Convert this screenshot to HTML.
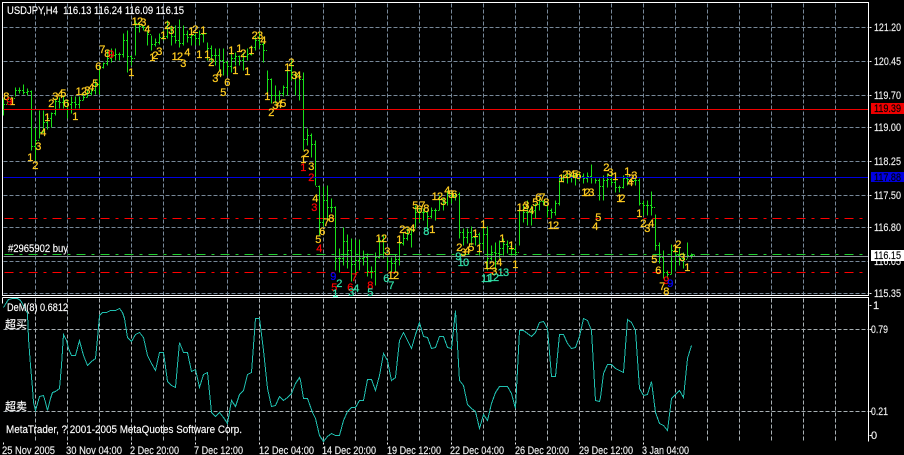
<!DOCTYPE html>
<html><head><meta charset="utf-8"><title>USDJPY,H4</title>
<style>
html,body{margin:0;padding:0;background:#000;width:904px;height:455px;overflow:hidden}
svg{display:block}
text{font-family:"Liberation Sans","Noto Sans CJK SC",sans-serif;font-size:11px}
.n text{letter-spacing:-.7px}
</style></head><body>
<svg xmlns="http://www.w3.org/2000/svg" width="904" height="455" viewBox="0 0 904 455">
<rect width="904" height="455" fill="#000"/>
<g transform="translate(.5,.5)" shape-rendering="crispEdges" fill="none">
<path stroke="#778899" stroke-dasharray="4 2" d="M3 27H868M3 61H868M3 95H868M3 127H868M3 161H868M3 195H868M3 227H868M3 261H868M3 293H868
M35 3V295M67 3V295M99 3V295M131 3V295M163 3V295M195 3V295M227 3V295M259 3V295M291 3V295M323 3V295M355 3V295M387 3V295M419 3V295M451 3V295M483 3V295M515 3V295M547 3V295M579 3V295M611 3V295M643 3V295M675 3V295M707 3V295M739 3V295M771 3V295M803 3V295M835 3V295"/>
<path stroke="#a8b0b4" stroke-dasharray="4 2" d="M3 329H868M3 411H868
M35 298V441M67 298V441M99 298V441M131 298V441M163 298V441M195 298V441M227 298V441M259 298V441M291 298V441M323 298V441M355 298V441M387 298V441M419 298V441M451 298V441M483 298V441M515 298V441M547 298V441M579 298V441M611 298V441M643 298V441M675 298V441M707 298V441M739 298V441M771 298V441M803 298V441M835 298V441"/>
<path stroke="#ff0000" stroke-dasharray="9 6 3 6" d="M4 218H862M4 272H862"/>
<path stroke="#20d030" stroke-dasharray="9 6 3 6" d="M4 254H862"/>
<path stroke="#18e018" d="M3 98V115M7 97V103M11 96V102M15 87V96M19 87V93M23 84V94M27 88V95M31 90V150M35 127V160M39 110V138M43 110V132M47 115V129M51 112V127M55 98V115M59 97V108M63 95V108M67 100V118M71 96V113M75 96V108M79 96V108M83 93V100M87 90V97M91 88V95M95 80V94M99 65V94M103 62V68M107 50V65M111 48V62M115 48V60M119 52V60M123 33V57M127 30V72M131 55V65M135 20V55M139 22V32M143 25V30M147 30V45M151 35V50M155 38V46M159 33V44M163 30V40M167 20V38M171 25V45M175 25V43M179 19V47M183 25V45M187 30V42M191 30V45M195 33V45M199 30V45M203 30V42M207 42V60M211 45V62M215 48V65M219 48V70M223 48V75M227 60V75M231 52V72M235 52V65M239 55V65M243 52V70M247 48V60M251 45V55M255 36V50M259 32V48M263 42V62M267 70V98M271 78V103M275 85V103M279 90V100M283 85V96M287 65V95M291 60V80M295 72V95M299 72V100
M303 72V150M307 128V145M311 133V157M315 140V185M319 185V235M323 186V226M327 185V220M331 198V212M335 206V270M339 248V272M343 227V265M347 234V268M351 238V281M355 239V275M359 239V270M363 250V265M367 253V276M371 266V278M375 252V285M379 237V258M383 235V258M387 255V270M391 257V272M395 254V272M399 237V265M403 232V245M407 228V240M411 228V247M415 205V228M419 207V222M423 208V220M427 210V230M431 207V218M435 208V220M439 195V210M443 198V210M447 190V205M451 192V203M455 192V200M459 192V238M463 228V245M467 228V243M471 226V245M475 231V245M479 232V255M483 226V250M487 226V270M491 245V260M495 242V270M499 240V258M503 238V255M507 240V253M511 243V255M515 245V255M519 207V245M523 205V222M527 200V225M531 205V225M535 203V218M539 198V210M543 200V205M547 205V217M551 208V218M555 200V215M559 176V205M563 174V182M567 173V183M571 172V182M575 172V185M579 172V180M583 173V183M587 172V182M591 164V183M595 178V183M599 178V200
M603 175V200M607 173V187M611 173V185M615 178V192M619 185V192M623 175V188M627 175V185M631 178V183M635 178V185M639 178V205M643 200V215M647 200V215M651 191V215M655 214V250M659 242V263M663 250V278M667 270V278M671 244V274M675 247V270M679 247V265M683 252V268M687 242V258M691 253V258"/>
<path stroke="#18e018" id="ct" d="M4 104.5h1M8 99.5h1M12 98.5h1M16 90.5h1M20 90.5h1M24 92.5h1M28 91.5h1M32 146.5h1M36 140.5h1M40 132.5h1M44 122.5h1M48 118.5h1M52 113.5h1M56 101.5h1M60 102.5h1M64 100.5h1M68 104.5h1M72 102.5h1M76 104.5h1M80 100.5h1M84 97.5h1M88 93.5h1M92 90.5h1M96 84.5h1M100 67.5h1M104 63.5h1M108 58.5h1M112 55.5h1M116 54.5h1M120 54.5h1M124 40.5h1M128 56.5h1M132 58.5h1M136 23.5h1M140 26.5h1M144 27.5h1M148 34.5h1M152 44.5h1M156 42.5h1M160 37.5h1M164 36.5h1M168 28.5h1M172 36.5h1M176 40.5h1M180 43.5h1M184 34.5h1M188 37.5h1M192 35.5h1M196 38.5h1M200 34.5h1M204 33.5h1M208 48.5h1M212 55.5h1M216 55.5h1M220 60.5h1M224 62.5h1M228 66.5h1M232 58.5h1M236 56.5h1M240 60.5h1M244 56.5h1M248 54.5h1M252 47.5h1M256 40.5h1M260 44.5h1M264 50.5h1M268 79.5h1M272 95.5h1M276 95.5h1M280 93.5h1M284 87.5h1M288 70.5h1M292 74.5h1M296 75.5h1M300 79.5h1M304 139.5h1M308 135.5h1M312 144.5h1M316 186.5h1M320 222.5h1M324 200.5h1M328 207.5h1M332 207.5h1M336 258.5h1M340 258.5h1M344 241.5h1M348 250.5h1M352 264.5h1M356 260.5h1M360 258.5h1M364 257.5h1M368 271.5h1M372 271.5h1M376 257.5h1M380 240.5h1M384 252.5h1M388 261.5h1M392 263.5h1M396 259.5h1M400 243.5h1M404 238.5h1M408 234.5h1M412 230.5h1M416 212.5h1M420 212.5h1M424 212.5h1M428 216.5h1M432 210.5h1M436 210.5h1M440 199.5h1M444 202.5h1M448 193.5h1M452 196.5h1M456 194.5h1M460 232.5h1M464 237.5h1M468 232.5h1M472 237.5h1M476 234.5h1M480 243.5h1M484 234.5h1M488 258.5h1M492 252.5h1M496 253.5h1M500 248.5h1M504 244.5h1M508 246.5h1M512 249.5h1M516 252.5h1M520 210.5h1M524 212.5h1M528 212.5h1M532 210.5h1M536 204.5h1M540 201.5h1M544 202.5h1M548 210.5h1M552 212.5h1M556 203.5h1M560 178.5h1M564 177.5h1M568 177.5h1M572 176.5h1M576 177.5h1M580 176.5h1M584 178.5h1M588 176.5h1M592 177.5h1M596 180.5h1M600 186.5h1M604 180.5h1M608 179.5h1M612 182.5h1M616 187.5h1M620 187.5h1M624 178.5h1M628 179.5h1M632 180.5h1M636 180.5h1M640 203.5h1M644 205.5h1M648 205.5h1M652 207.5h1M656 245.5h1M660 257.5h1M664 272.5h1M668 274.5h1M672 250.5h1M676 255.5h1M680 258.5h1M684 259.5h1M688 255.5h1M692 255.5h1" transform="translate(-.5,-.5)"/>
<use href="#ct" x="2"/>
<path stroke="#8a9298" d="M3 256H868"/>
<path stroke="#f00000" d="M3 109H868"/>
<path stroke="#0000e0" d="M3 177H868"/>
<path stroke="#20c0b0" stroke-linejoin="miter" d="M3 307L6 302L8 299L12 298L17 298L20 300L24 307L27 313L28 338L30 365L32 388L33 402L35 410L37 403L39 396L43 395L45 402L47 410L50 398L52 392L55 391L59 388L61 365L63 334L66 340L68 348L71 355L75 355L79 340L83 355L87 365L91 361L95 358L97 338L99 315L102 312L106 312L110 310L115 310L119 308L122 312L124 318L127 337L131 341L135 334L139 332L143 337L147 355L151 363L155 370L159 352L163 352L167 381L171 385L175 387L179 342L183 352L187 352L191 371L195 369L199 387L203 374L207 372L211 412L215 416L219 412L223 417L227 423L231 400L235 406L239 394L243 390L247 374L251 372L255 318L259 318L263 350L267 388L271 406L275 405L279 396L283 400L287 397L291 393L295 383L299 377L300 380L303 398L307 398L312 412L315 418L319 435L323 441L327 436L331 433L335 435L339 435L343 420L347 411L351 407L355 407L359 400L363 400L367 379L371 379L375 390L379 375L383 353L387 360L391 380L395 377L399 340L403 332L407 340L411 348L415 334L419 322L423 336L427 337L431 348L435 347L439 336L443 336L447 347L451 348L455 310L459 380L463 385L467 404L471 408L475 411L479 428L483 414L487 420L491 403L495 392L499 386L507 386L511 393L515 408L519 330L523 330L527 333L531 336L535 332L539 322L543 321L547 328L551 376L555 376L559 334L563 334L567 343L571 348L575 347L579 336L583 318L587 320L591 330L595 400L599 401L600 397L603 373L607 364L611 364L615 368L623 372L627 319L631 322L635 330L639 388L643 395L647 394L651 381L655 412L659 423L663 425L667 430L671 398L675 394L679 390L683 397L687 358L691 345"/>
<path stroke="#fff" d="M2 2H868V295H2ZM2 297H868V441"/>
<path stroke="#fff" d="M2 297V303"/>
<path stroke="#f0f0f0" d="M869 27h2M869 61h2M869 95h2M869 127h2M869 161h2M869 195h2M869 227h2M869 293h2M869 305h2M869 329h2M869 411h2M869 435h2M3 442v2M67 442v2M131 442v2M195 442v2M259 442v2M323 442v2M387 442v2M451 442v2M515 442v2M579 442v2M643 442v2"/>
</g>
<g class="n" fill="#ffcc20" stroke="#ffcc20" stroke-width=".25" text-anchor="middle" transform="translate(0,4)">
<text x="6" y="96">8</text><text x="12" y="101">1</text><text x="38" y="146">3</text><text x="30" y="157">1</text><text x="35" y="165">2</text><text x="43" y="132">4</text><text x="47" y="117">1</text><text x="51" y="103">2</text><text x="55" y="96">3</text><text x="60" y="94">4</text><text x="63" y="93">5</text><text x="66" y="103">6</text><text x="75" y="116">1</text><text x="81" y="91">12</text><text x="87" y="90">3</text><text x="91" y="87">4</text><text x="95" y="83">5</text><text x="98" y="66">6</text><text x="102" y="49">7</text><text x="107" y="53">8</text><text x="131" y="72">1</text><text x="137" y="21">12</text><text x="143" y="22">3</text><text x="147" y="29">4</text><text x="152" y="57">1</text><text x="155" y="55">2</text><text x="159" y="51">3</text><text x="163" y="35">1</text><text x="167" y="25">2</text><text x="171" y="30">3</text><text x="177" y="56">12</text><text x="183" y="63">3</text><text x="187" y="52">4</text><text x="199" y="54">1</text><text x="207" y="54">1</text><text x="211" y="62">2</text><text x="215" y="78">3</text><text x="219" y="73">4</text><text x="223" y="92">5</text><text x="227" y="82">6</text><text x="191" y="31">1</text><text x="195" y="29">2</text><text x="203" y="30">1</text><text x="231" y="50">1</text><text x="235" y="70">1</text><text x="239" y="48">1</text><text x="243" y="53">2</text><text x="247" y="71">1</text><text x="251" y="50">1</text><text x="257" y="35">23</text><text x="263" y="40">4</text><text x="267" y="96">1</text><text x="271" y="112">2</text><text x="275" y="105">3</text><text x="279" y="104">4</text><text x="283" y="103">5</text><text x="291" y="62">2</text><text x="287" y="67">1</text><text x="294" y="75">3</text><text x="298" y="75">4</text>
<text x="306" y="153">2</text><text x="303" y="159">1</text><text x="311" y="166">3</text><text x="315" y="198">4</text><text x="326" y="222">7</text><text x="331" y="218">8</text><text x="322" y="231">6</text><text x="318" y="239">5</text><text x="393" y="275">12</text><text x="381" y="238">12</text><text x="387" y="251">3</text><text x="399" y="239">1</text><text x="402" y="229">2</text><text x="407" y="230">3</text><text x="412" y="228">4</text><text x="415" y="205">5</text><text x="419" y="209">6</text><text x="422" y="205">7</text><text x="426" y="208">8</text><text x="432" y="229">1</text><text x="437" y="196">12</text><text x="443" y="201">3</text><text x="447" y="190">4</text><text x="451" y="194">5</text><text x="454" y="194">6</text><text x="459" y="247">2</text><text x="463" y="252">3</text><text x="467" y="250">4</text><text x="471" y="247">5</text><text x="479" y="248">1</text><text x="475" y="233">1</text><text x="483" y="224">1</text><text x="489" y="265">12</text><text x="494" y="271">3</text><text x="499" y="262">4</text><text x="502" y="238">1</text><text x="511" y="245">1</text><text x="515" y="264">1</text><text x="522" y="207">12</text><text x="526" y="205">3</text><text x="531" y="210">4</text><text x="535" y="202">5</text><text x="538" y="197">6</text><text x="542" y="197">7</text><text x="546" y="202">8</text><text x="553" y="225">12</text><text x="595" y="226">4</text><text x="598" y="217">5</text><text x="561" y="178">1</text><text x="565" y="174">2</text><text x="568" y="174">3</text><text x="572" y="174">4</text><text x="575" y="174">5</text><text x="578" y="175">6</text><text x="584" y="192">1</text><text x="587" y="192">2</text><text x="591" y="192">3</text>
<text x="606" y="167">2</text><text x="610" y="172">3</text><text x="615" y="176">1</text><text x="627" y="171">1</text><text x="631" y="178">2</text><text x="634" y="175">3</text><text x="630" y="182">4</text><text x="619" y="198">1</text><text x="622" y="198">2</text><text x="639" y="213">1</text><text x="643" y="223">2</text><text x="647" y="228">3</text><text x="651" y="223">4</text><text x="654" y="259">5</text><text x="658" y="270">6</text><text x="662" y="286">7</text><text x="666" y="291">8</text><text x="675" y="248">1</text><text x="678" y="244">2</text><text x="682" y="257">3</text><text x="687" y="267">1</text>
</g>
<g class="n" fill="#ff0000" stroke="#ff0000" stroke-width=".25" text-anchor="middle" transform="translate(0,4)">
<text x="9" y="101">9</text><text x="111" y="54">9</text><text x="303" y="167">1</text><text x="311" y="177">2</text><text x="314" y="207">3</text><text x="319" y="248">4</text><text x="334" y="287">5</text><text x="350" y="287">6</text><text x="354" y="277">7</text><text x="370" y="285">8</text><text x="666" y="280">9</text>
</g>
<g class="n" fill="#30e0a8" stroke="#30e0a8" stroke-width=".25" text-anchor="middle" transform="translate(0,4)">
<text x="339" y="283">2</text><text x="335" y="293">1</text><text x="351" y="292">3</text><text x="356" y="288">4</text><text x="370" y="292">5</text><text x="386" y="278">6</text><text x="391" y="285">7</text><text x="426" y="231">8</text><text x="458" y="256">9</text><text x="463" y="262">10</text><text x="493" y="277">12</text><text x="486" y="278">11</text><text x="503" y="272">13</text>
</g>
<g class="n" fill="#0000ff" stroke="#0000ff" stroke-width=".25" text-anchor="middle" transform="translate(0,4)">
<text x="333" y="276">9</text><text x="670" y="283">9</text>
</g>
<g fill="#fff" stroke="#fff" stroke-width=".15">
<text x="7" y="14" xml:space="preserve" textLength="177" lengthAdjust="spacingAndGlyphs">USDJPY,H4  116.13 116.24 116.09 116.15</text>
<text x="8" y="252" textLength="60" lengthAdjust="spacingAndGlyphs">#2965902 buy</text>
<text x="7" y="311" textLength="61" lengthAdjust="spacingAndGlyphs">DeM(8) 0.6812</text>
<text x="5" y="328">超买</text>
<text x="5" y="410">超卖</text>
<text x="6" y="433" textLength="236" lengthAdjust="spacingAndGlyphs">MetaTrader, ? 2001-2005 MetaQuotes Software Corp.</text>
</g>
<g fill="#f0f0f0" stroke="#f0f0f0" stroke-width=".15">
<text x="874" y="31" textLength="27" lengthAdjust="spacingAndGlyphs">121.20</text><text x="874" y="65" textLength="27" lengthAdjust="spacingAndGlyphs">120.45</text><text x="874" y="99" textLength="27" lengthAdjust="spacingAndGlyphs">119.70</text><text x="874" y="131" textLength="27" lengthAdjust="spacingAndGlyphs">119.00</text><text x="874" y="165" textLength="27" lengthAdjust="spacingAndGlyphs">118.25</text><text x="874" y="199" textLength="27" lengthAdjust="spacingAndGlyphs">117.50</text><text x="874" y="231" textLength="27" lengthAdjust="spacingAndGlyphs">116.80</text><text x="874" y="265" textLength="27" lengthAdjust="spacingAndGlyphs">116.05</text><text x="874" y="297" textLength="27" lengthAdjust="spacingAndGlyphs">115.35</text>
<text x="873" y="309">1</text><text x="871" y="333" textLength="17" lengthAdjust="spacingAndGlyphs">0.79</text><text x="871" y="415" textLength="17" lengthAdjust="spacingAndGlyphs">0.21</text><text x="871" y="439">0</text>
</g>
<rect x="871" y="103" width="33" height="11" fill="#f00000"/>
<rect x="871" y="172" width="33" height="10" fill="#0000e0"/>
<rect x="871" y="250" width="33" height="11" fill="#fff"/>
<g fill="#000" stroke="#000" stroke-width=".15">
<text x="874" y="112" textLength="27" lengthAdjust="spacingAndGlyphs">119.39</text><text x="874" y="181" textLength="27" lengthAdjust="spacingAndGlyphs">117.88</text><text x="874" y="259" textLength="27" lengthAdjust="spacingAndGlyphs">116.15</text>
</g>
<g fill="#f0f0f0" stroke="#f0f0f0" stroke-width=".15">
<text x="2" y="454" textLength="53" lengthAdjust="spacingAndGlyphs">25 Nov 2005</text><text x="66" y="454" textLength="56" lengthAdjust="spacingAndGlyphs">30 Nov 04:00</text><text x="130" y="454" textLength="49" lengthAdjust="spacingAndGlyphs">2 Dec 20:00</text><text x="194" y="454" textLength="49" lengthAdjust="spacingAndGlyphs">7 Dec 12:00</text><text x="259" y="454" textLength="55" lengthAdjust="spacingAndGlyphs">12 Dec 04:00</text><text x="322" y="454" textLength="54" lengthAdjust="spacingAndGlyphs">14 Dec 20:00</text><text x="387" y="454" textLength="54" lengthAdjust="spacingAndGlyphs">19 Dec 12:00</text><text x="450" y="454" textLength="54" lengthAdjust="spacingAndGlyphs">22 Dec 04:00</text><text x="515" y="454" textLength="54" lengthAdjust="spacingAndGlyphs">26 Dec 20:00</text><text x="579" y="454" textLength="54" lengthAdjust="spacingAndGlyphs">29 Dec 12:00</text><text x="642" y="454" textLength="47" lengthAdjust="spacingAndGlyphs">3 Jan 04:00</text>
</g>
</svg>
</body></html>
